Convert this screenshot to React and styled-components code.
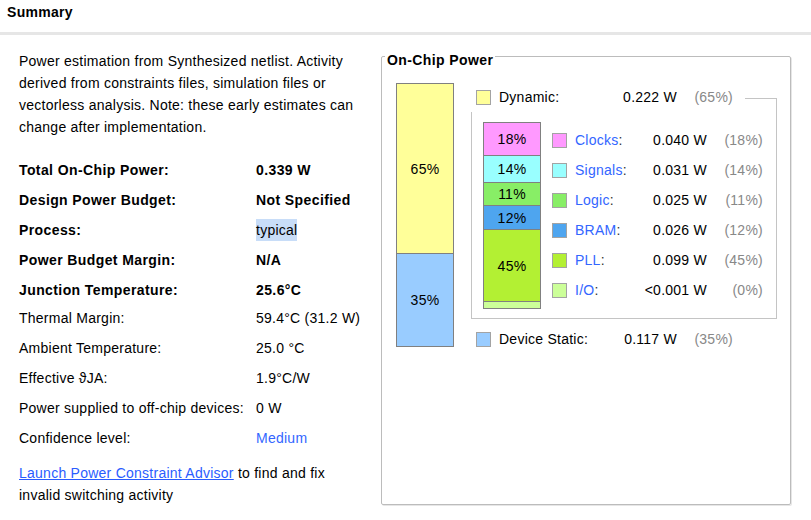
import React from 'react';
import styled, { createGlobalStyle } from 'styled-components';

const Global = createGlobalStyle`
  html, body { margin: 0; padding: 0; background: #fff; }
  body {
    font-family: "Liberation Sans", Arial, sans-serif;
    font-size: 14px;
    letter-spacing: 0.25px;
    color: #000;
  }
`;

const Page = styled.div`
  width: 811px;
  height: 520px;
  overflow: hidden;
`;

const Header = styled.div`
  box-sizing: border-box;
  height: 35px;
  padding: 4px 7px 0;
  border-bottom: 3px solid #e6e6e6;
  font-weight: bold;
  letter-spacing: 0.3px;
  line-height: 16px;
`;

const Main = styled.div`
  display: flex;
  gap: 12px;
  padding-left: 19px;
`;

const LeftCol = styled.div`
  width: 350px;
  padding-top: 15px;
`;

const Description = styled.p`
  margin: 0;
  line-height: 22px;
`;

const InfoTable = styled.div`
  margin-top: 17px;
  display: flex;
  flex-direction: column;
`;

const InfoRow = styled.div`
  display: flex;
  align-items: center;
  height: 30px;
  font-weight: ${(p) => (p.$bold ? 'bold' : 'normal')};
  letter-spacing: ${(p) => (p.$bold ? '0.4px' : '0.25px')};
  margin-top: ${(p) => (p.$shift ? '-2px' : '0')};
`;

const InfoLabel = styled.div`
  width: 237px;
  flex: none;
`;

const InfoValue = styled.div`
  color: ${(p) => (p.$link ? '#3366ff' : '#000')};
`;

const Highlight = styled.span`
  display: inline-block;
  line-height: 22px;
  background: #c8ddf8;
  font-weight: normal;
  letter-spacing: 0.25px;
`;

const LinkPara = styled.p`
  margin: 9px 0 0;
  line-height: 22px;
`;

const Link = styled.a`
  color: #2a5cff;
  text-decoration: underline;
`;

const Panel = styled.div`
  box-sizing: border-box;
  margin-top: 21px;
  width: 410px;
  height: 449px;
  border: 1px solid #bcbcbc;
  border-radius: 2px;
  box-shadow: 1px 1px 0 #e6e6e6;
  display: flex;
  flex-direction: column;
`;

const PanelTitle = styled.div`
  align-self: flex-start;
  margin: -5px 0 0 3px;
  padding: 0 2px;
  background: #fff;
  font-weight: bold;
  letter-spacing: 0.4px;
  line-height: 16px;
`;

const PanelBody = styled.div`
  display: flex;
  align-items: flex-start;
  margin-top: 15px;
  padding-left: 14px;
  gap: 17px;
`;

const StackBar = styled.div`
  box-sizing: border-box;
  width: 58px;
  flex: none;
  border: 1px solid #808080;
  display: flex;
  flex-direction: column;
`;

const Segment = styled.div`
  box-sizing: border-box;
  flex: none;
  height: ${(p) => p.$h}px;
  background: ${(p) => p.$c};
  border-top: ${(p) => (p.$first ? 'none' : '1px solid #808080')};
  display: flex;
  align-items: center;
  justify-content: center;
  overflow: hidden;
  line-height: 16px;
`;

const LegendCol = styled.div`
  width: 306px;
  margin-top: 2px;
  display: flex;
  flex-direction: column;
`;

const TopRow = styled.div`
  display: flex;
  align-items: center;
  height: 24px;
  padding-left: 5px;
  margin-bottom: 3px;
`;

const TopLine = styled.div`
  flex: 1;
  align-self: stretch;
  margin: 13px 0 -3px 12px;
  border-top: 1px solid #c4c4c4;
  border-right: 1px solid #c4c4c4;
`;

const Swatch = styled.div`
  box-sizing: border-box;
  width: 15px;
  height: 15px;
  flex: none;
  border: 1px solid #a3a3a3;
  background: ${(p) => p.$c};
  margin-right: 8px;
`;

const Label = styled.div`
  width: ${(p) => p.$w}px;
  flex: none;
  white-space: nowrap;
  color: ${(p) => (p.$blue ? '#3366ff' : '#000')};
`;

const Colon = styled.span`
  color: #333;
`;

const Value = styled.div`
  width: ${(p) => p.$w}px;
  flex: none;
  text-align: right;
  white-space: nowrap;
`;

const Pct = styled.div`
  width: 56px;
  flex: none;
  text-align: right;
  color: #888;
`;

const SubBox = styled.div`
  border: 1px solid #c4c4c4;
  border-top: none;
  display: flex;
  align-items: flex-start;
  padding: 10px 0 9px 11px;
`;

const SubLegend = styled.div`
  margin: 3px 0 0 11px;
  display: flex;
  flex-direction: column;
`;

const SubRow = styled.div`
  display: flex;
  align-items: center;
  height: 30px;
`;

const StaticRow = styled(TopRow)`
  margin: 8px 0 0;
`;

const mainSegs = [
  { h: 169, c: '#ffff99', t: '65%' },
  { h: 93, c: '#99ccff', t: '35%' },
];

const subSegs = [
  { h: 32, c: '#ff99ff', t: '18%' },
  { h: 27, c: '#99ffff', t: '14%' },
  { h: 23, c: '#88ee66', t: '11%' },
  { h: 24, c: '#4ea5ef', t: '12%' },
  { h: 72, c: '#b3f033', t: '45%' },
  { h: 7, c: '#ccff99', t: '' },
];

const subRows = [
  { c: '#ff99ff', n: 'Clocks', v: '0.040 W', p: '(18%)' },
  { c: '#99ffff', n: 'Signals', v: '0.031 W', p: '(14%)' },
  { c: '#88ee66', n: 'Logic', v: '0.025 W', p: '(11%)' },
  { c: '#4ea5ef', n: 'BRAM', v: '0.026 W', p: '(12%)' },
  { c: '#b3f033', n: 'PLL', v: '0.099 W', p: '(45%)' },
  { c: '#ccff99', n: 'I/O', v: '<0.001 W', p: '(0%)' },
];

const info = [
  { l: 'Total On-Chip Power:', v: '0.339 W', b: true },
  { l: 'Design Power Budget:', v: 'Not Specified', b: true },
  { l: 'Process:', v: 'typical', b: true, hl: true },
  { l: 'Power Budget Margin:', v: 'N/A', b: true },
  { l: 'Junction Temperature:', v: '25.6°C', b: true },
  { l: 'Thermal Margin:', v: '59.4°C (31.2 W)', shift: true },
  { l: 'Ambient Temperature:', v: '25.0 °C' },
  { l: 'Effective \u03D1JA:', v: '1.9°C/W' },
  { l: 'Power supplied to off-chip devices:', v: '0 W' },
  { l: 'Confidence level:', v: 'Medium', link: true },
];

export default function App() {
  return (
    <Page>
      <Global />
      <Header>Summary</Header>
      <Main>
        <LeftCol>
          <Description>
            Power estimation from Synthesized netlist. Activity derived from constraints files,
            simulation files or vectorless analysis. Note: these early estimates can change after
            implementation.
          </Description>
          <InfoTable>
            {info.map((r) => (
              <InfoRow key={r.l} $bold={r.b} $shift={r.shift}>
                <InfoLabel>{r.l}</InfoLabel>
                <InfoValue $link={r.link}>
                  {r.hl ? <Highlight>{r.v}</Highlight> : r.v}
                </InfoValue>
              </InfoRow>
            ))}
          </InfoTable>
          <LinkPara>
            <Link href="#">Launch Power Constraint Advisor</Link> to find and fix invalid switching
            activity
          </LinkPara>
        </LeftCol>
        <Panel>
          <PanelTitle>On-Chip Power</PanelTitle>
          <PanelBody>
            <StackBar>
              {mainSegs.map((s, i) => (
                <Segment key={i} $h={s.h} $c={s.c} $first={i === 0}>
                  {s.t}
                </Segment>
              ))}
            </StackBar>
            <LegendCol>
              <TopRow>
                <Swatch $c="#ffff99" />
                <Label $w={100}>Dynamic:</Label>
                <Value $w={78}>0.222 W</Value>
                <Pct>(65%)</Pct>
                <TopLine />
              </TopRow>
              <SubBox>
                <StackBar>
                  {subSegs.map((s, i) => (
                    <Segment key={i} $h={s.h} $c={s.c} $first={i === 0}>
                      {s.t}
                    </Segment>
                  ))}
                </StackBar>
                <SubLegend>
                  {subRows.map((r) => (
                    <SubRow key={r.n}>
                      <Swatch $c={r.c} />
                      <Label $w={55} $blue>
                        {r.n}
                        <Colon>:</Colon>
                      </Label>
                      <Value $w={77}>{r.v}</Value>
                      <Pct>{r.p}</Pct>
                    </SubRow>
                  ))}
                </SubLegend>
              </SubBox>
              <StaticRow>
                <Swatch $c="#99ccff" />
                <Label $w={100}>Device Static:</Label>
                <Value $w={78}>0.117 W</Value>
                <Pct>(35%)</Pct>
              </StaticRow>
            </LegendCol>
          </PanelBody>
        </Panel>
      </Main>
    </Page>
  );
}
